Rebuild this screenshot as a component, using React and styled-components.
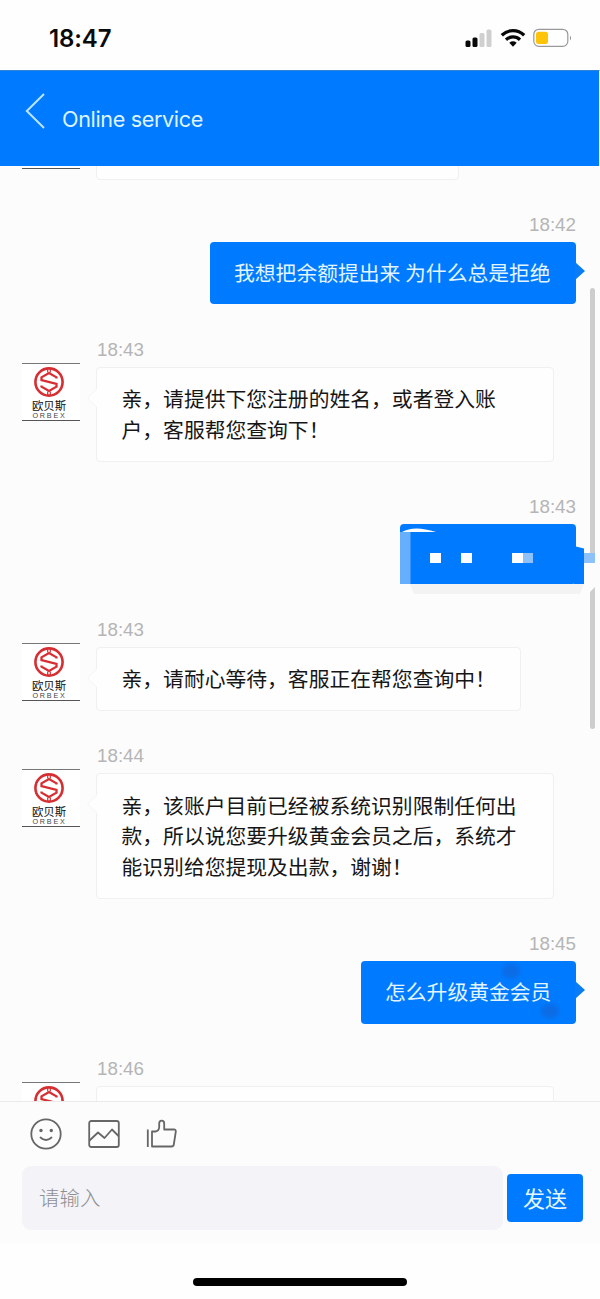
import React from "react";
import styled, { createGlobalStyle } from "styled-components";

const GlobalStyle = createGlobalStyle`
  * { box-sizing: border-box; }
  body {
    margin: 0;
    background: #fefefe;
    font-family: "Liberation Sans", "Noto Sans CJK SC", sans-serif;
  }
`;

const Screen = styled.div`
  display: flex;
  flex-direction: column;
  width: 600px;
  height: 1299px;
  overflow: hidden;
  background: #fefefe;
`;

const StatusBar = styled.div`
  display: flex;
  align-items: center;
  justify-content: space-between;
  flex: none;
  height: 70px;
  padding: 6px 28px 0 49px;
`;

const Clock = styled.span`
  padding-top: 1px;
  font: 600 24px/30px Inter, sans-serif;
  letter-spacing: -0.1px;
  color: #0a0a0a;
`;

const StatusIcons = styled.div`
  display: flex;
  align-items: center;
  gap: 7px;
`;

const Header = styled.header`
  display: flex;
  flex: none;
  align-items: flex-start;
  gap: 17px;
  height: 96px;
  padding: 22px 0 0 25px;
  background: #007bff;
  border-right: 1px solid #e9f3fd;
  border-top: 1px solid #2f83d3;
`;

const Title = styled.h1`
  margin: 12px 0 0;
  font: 400 21.6px/28px Inter, sans-serif;
  letter-spacing: -0.36px;
  color: #def3ff;
`;

const Chat = styled.main`
  position: relative;
  flex: none;
  height: 935px;
  overflow: hidden;
  background: #fcfcfc;
`;

const Feed = styled.div`
  display: flex;
  flex-direction: column;
  gap: 33.4px;
  margin-top: -80.5px;
`;

const Row = styled.div`
  display: flex;
  flex: none;
  flex-direction: ${(p) => (p.$mine ? "row-reverse" : "row")};
  align-items: flex-start;
  gap: 16px;
  padding: ${(p) => (p.$mine ? "0 24px" : "0 22px")};
`;

const Avatar = styled.div`
  display: flex;
  flex: none;
  flex-direction: column;
  align-items: center;
  width: 58px;
  height: 58px;
  margin-top: 25px;
  border-top: 1px solid #777;
  border-bottom: 1px solid #555;
  background: #fff;
`;

const BrandName = styled.span`
  margin: 1px 4px 0 0;
  font: 400 11.4px/12px "Noto Sans CJK SC", sans-serif;
  color: #111;
`;

const BrandLatin = styled.span`
  margin: 1px 3px 0 0;
  font-size: 7.2px;
  line-height: 7px;
  letter-spacing: 1.8px;
  color: #444;
`;

const Message = styled.div`
  display: flex;
  flex-direction: column;
  align-items: ${(p) => (p.$mine ? "flex-end" : "flex-start")};
`;

const Time = styled.time`
  height: 24px;
  margin: 0 0 5px;
  padding-left: 1px;
  font-size: 18.8px;
  line-height: 24px;
  color: #b5b5b5;
`;

const Bubble = styled.div`
  position: relative;
  width: ${(p) => (p.$width ? `${p.$width}px` : "auto")};
  min-height: ${(p) => p.$minHeight || 0}px;
  padding: ${(p) => (p.$mine ? "15px 24px 17px" : "15.5px 24.5px 16.5px")};
  border: ${(p) => (p.$mine ? "0" : "1px solid #f0f0f0")};
  border-radius: 4px;
  background: ${(p) => (p.$mine ? "#007bff" : "#fefefe")};
  color: ${(p) => (p.$mine ? "#e2f5ff" : "#161616")};
  font: 400 20.8px/30.5px "Noto Sans CJK SC", sans-serif;
  white-space: pre;

  &::after {
    content: "";
    position: absolute;
    top: ${(p) => (p.$mine ? "20px" : "21px")};
    ${(p) => (p.$mine ? "right: -9px;" : "left: -9px;")}
    border-style: solid;
    border-color: transparent;
    border-width: ${(p) => (p.$mine ? "9px 0 9px 10px" : "9px 9px 9px 0")};
    ${(p) => (p.$mine ? "border-left-color: #0a7df5;" : "border-right-color: #fefefe;")}
    display: ${(p) => (p.$noTail ? "none" : "block")};
  }

  &::before {
    content: "";
    position: absolute;
    top: 20px;
    left: -10px;
    border-style: solid;
    border-color: transparent #f3f3f3 transparent transparent;
    border-width: 10px 10px 10px 0;
    display: ${(p) => (p.$mine ? "none" : "block")};
  }
`;

const Smudge = styled.i`
  position: absolute;
  width: 18px;
  height: 14px;
  border-radius: 7px;
  background: rgba(30, 85, 190, 0.4);
  filter: blur(2px);
  top: ${(p) => p.$top}px;
  right: ${(p) => p.$right}px;
`;

const Mosaic = styled.svg`
  position: absolute;
  left: 0;
  top: 0;
  z-index: 2;
  overflow: visible;
`;

const ScrollThumb = styled.div`
  position: absolute;
  top: 122px;
  right: 5px;
  width: 5px;
  height: 441px;
  border-radius: 3px;
  background: #cdcdcd;
`;

const Composer = styled.footer`
  flex: none;
  height: 143px;
  border-top: 1px solid #eaeaea;
  background: #fcfcfc;
`;

const Tools = styled.div`
  display: flex;
  align-items: center;
  gap: 24px;
  height: 64px;
  padding: 0 0 1px 29px;
`;

const InputRow = styled.div`
  display: flex;
  align-items: center;
  gap: 4px;
  padding-left: 22px;
`;

const Field = styled.div`
  width: 481px;
  height: 64px;
  padding-left: 17px;
  border-radius: 9px;
  background: #f3f3f8;
  font: 300 20.5px/62px "Noto Sans CJK SC", sans-serif;
  color: #8f8f93;
`;

const SendButton = styled.button`
  width: 76px;
  height: 48px;
  padding: 0 0 2px;
  border: 0;
  border-radius: 4px;
  background: #007bff;
  color: #e6f6ff;
  font: 400 22px/46px "Noto Sans CJK SC", sans-serif;
`;

const HomeArea = styled.div`
  display: flex;
  justify-content: center;
  padding-top: 34px;
`;

const HomeIndicator = styled.div`
  width: 214px;
  height: 8px;
  border-radius: 4px;
  background: #000;
`;

const Signal = () => (
  <svg width="28" height="20" viewBox="0 0 28 20">
    <rect x="0.5" y="12.5" width="5" height="6.5" rx="1.5" fill="#080808" />
    <rect x="7.5" y="9.5" width="5" height="9.5" rx="1.5" fill="#080808" />
    <rect x="14.5" y="5" width="5" height="14" rx="1.5" fill="#cfcfcf" />
    <rect x="21.5" y="1.5" width="5" height="17.5" rx="1.5" fill="#cfcfcf" />
  </svg>
);

const Wifi = () => (
  <svg width="26" height="20" viewBox="0 0 26 20" fill="none" stroke="#080808" strokeWidth="3.3">
    <path d="M1.8 7.2C8.2 1 17.8 1 24.2 7.2" />
    <path d="M6 11.7C10 8 16 8 20 11.7" />
    <path d="M9.3 14.7Q13 12 16.7 14.7L13 18.8Z" fill="#080808" stroke="none" />
  </svg>
);

const Battery = () => (
  <svg width="39" height="20" viewBox="0 0 39 20">
    <rect x="0.8" y="1.3" width="34" height="17" rx="5" fill="#fff" stroke="#999" strokeWidth="1.2" />
    <rect x="3" y="3.7" width="12" height="12.4" rx="2.5" fill="#fdc409" />
    <path d="M37 7.5q2 2.4 0 5z" fill="#8c8c8c" />
  </svg>
);

const BackIcon = () => (
  <svg width="20" height="36" viewBox="0 0 20 36" fill="none" stroke="#b9e5ff" strokeWidth="2">
    <path d="M19 1L1.8 18L19 35" />
  </svg>
);

const Mark = styled.svg`
  flex: none;
  margin: 2px 4px 0 0;
`;

const BrandMark = () => (
  <Mark width="32" height="32" viewBox="0 0 32 32" fill="none" stroke="#d62f33">
    <circle cx="16" cy="16" r="13.6" strokeWidth="2.6" />
    <path d="M14.7 2V6.5M17.3 2V6.5M14.7 25.5V30M17.3 25.5V30" strokeWidth="1.2" />
    <path d="M23.5 12.5V11.3L16 7L8.5 11.3V14L23.5 18V20.7L16 25L8.5 20.7V19.5" strokeWidth="2.3" />
  </Mark>
);

const SmileIcon = () => (
  <svg width="34" height="34" viewBox="0 0 34 34" fill="none" stroke="#666" strokeWidth="1.8">
    <circle cx="17" cy="17" r="14.7" />
    <circle cx="12" cy="13.5" r="1.7" fill="#666" stroke="none" />
    <circle cx="22.3" cy="13.5" r="1.7" fill="#666" stroke="none" />
    <path d="M11.5 20.5q5.5 5 11 0" strokeLinecap="round" />
  </svg>
);

const ImageIcon = () => (
  <svg width="34" height="34" viewBox="0 0 34 34" fill="none" stroke="#666" strokeWidth="1.8" strokeLinejoin="round">
    <rect x="2.2" y="4" width="29.6" height="26" rx="2" />
    <path d="M2.5 23.5L11 15.5L17.5 21L25 12.5L31.5 19" />
  </svg>
);

const ThumbIcon = () => (
  <svg width="34" height="34" viewBox="0 0 34 34" fill="none" stroke="#666" strokeWidth="1.8" strokeLinejoin="round">
    <path d="M2.8 12.5V30" />
    <path d="M7 29.5V14.5H10.5Q14 14 14.2 10V6.5Q14.3 3.7 16.6 3.7Q19.2 3.7 19.2 6.5V12.5H29Q31 12.5 30.8 14.5L28.8 27.5Q28.5 29.5 26.5 29.5Z" />
  </svg>
);

const Brand = ({ markOnly }) => (
  <Avatar>
    <BrandMark />
    {!markOnly && (
      <>
        <BrandName>欧贝斯</BrandName>
        <BrandLatin>ORBEX</BrandLatin>
      </>
    )}
  </Avatar>
);

const Redaction = () => (
  <Mosaic width="195" height="70" viewBox="0 0 195 70">
    <path d="M174 22L184 24.5V60H174Z" fill="#007bff" />
    <path d="M10 60H184L180 70H14Z" fill="#f3f3f3" />
    <path d="M188 39H197V61L190 68H188Z" fill="#fcfcfc" />
    <rect x="0" y="8" width="10.5" height="52" fill="#66affc" />
    <path d="M2 8Q14 1 36 8Z" fill="#fcfcfc" />
    <path d="M30 29H41V39H30ZM61 29H72V39H61ZM112 29H123V39H112Z" fill="#fcfdff" />
    <path d="M123 29H133V39H123ZM184 29H195V39H184Z" fill="#8dc1fa" />
  </Mosaic>
);

const messages = [
  { text: "", width: 363, minHeight: 65, clipped: true },
  { mine: true, time: "18:42", text: "我想把余额提出来 为什么总是拒绝", width: 366 },
  { time: "18:43", text: "亲，请提供下您注册的姓名，或者登入账\n户，客服帮您查询下！", width: 458 },
  { mine: true, time: "18:43", text: "", width: 176, minHeight: 60, redacted: true },
  { time: "18:43", text: "亲，请耐心等待，客服正在帮您查询中！", width: 425 },
  { time: "18:44", text: "亲，该账户目前已经被系统识别限制任何出\n款，所以说您要升级黄金会员之后，系统才\n能识别给您提现及出款，谢谢！", width: 458 },
  { mine: true, time: "18:45", text: "怎么升级黄金会员", width: 215, smudged: true },
  { time: "18:46", text: "", width: 458, minHeight: 65, clipped: true },
];

export default function App() {
  return (
    <Screen>
      <GlobalStyle />
      <StatusBar>
        <Clock>18:47</Clock>
        <StatusIcons>
          <Signal />
          <Wifi />
          <Battery />
        </StatusIcons>
      </StatusBar>
      <Header>
        <BackIcon />
        <Title>Online service</Title>
      </Header>
      <Chat>
        <ScrollThumb />
        <Feed>
          {messages.map((m, i) => (
            <Row key={i} $mine={m.mine}>
              {!m.mine && <Brand markOnly={m.clipped} />}
              <Message $mine={m.mine}>
                <Time>{m.time}</Time>
                <Bubble $mine={m.mine} $width={m.width} $minHeight={m.minHeight} $noTail={m.redacted}>
                  {m.text}
                  {m.redacted && <Redaction />}
                  {m.smudged && (
                    <>
                      <Smudge $top={3} $right={56} />
                      <Smudge $top={43} $right={17} />
                    </>
                  )}
                </Bubble>
              </Message>
            </Row>
          ))}
        </Feed>
      </Chat>
      <Composer>
        <Tools>
          <SmileIcon />
          <ImageIcon />
          <ThumbIcon />
        </Tools>
        <InputRow>
          <Field>请输入</Field>
          <SendButton>发送</SendButton>
        </InputRow>
      </Composer>
      <HomeArea>
        <HomeIndicator />
      </HomeArea>
    </Screen>
  );
}
